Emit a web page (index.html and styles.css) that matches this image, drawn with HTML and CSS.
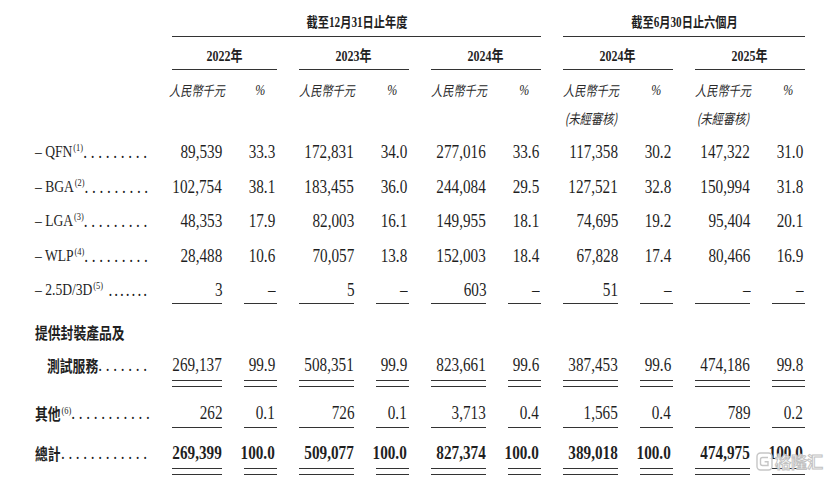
FILE: index.html
```html
<!DOCTYPE html>
<html lang="zh-Hant">
<head>
<meta charset="utf-8">
<title>收入明細</title>
<link rel="stylesheet" href="styles.css">
</head>
<body>
<div class="sheet">
  <div class="row head1">
    <div class="grp annual"><span class="sx">截至12月31日止年度</span></div>
    <div class="grp interim"><span class="sx">截至6月30日止六個月</span></div>
  </div>
  <div class="row years">
    <div class="yr"><span class="sx">2022年</span></div>
    <div class="yr"><span class="sx">2023年</span></div>
    <div class="yr"><span class="sx">2024年</span></div>
    <div class="yr"><span class="sx">2024年</span></div>
    <div class="yr"><span class="sx">2025年</span></div>
  </div>
  <div class="row units">
    <div class="u"><span class="sx">人民幣千元</span></div><div class="pc"><span class="sx">%</span></div>
    <div class="u"><span class="sx">人民幣千元</span></div><div class="pc"><span class="sx">%</span></div>
    <div class="u"><span class="sx">人民幣千元</span></div><div class="pc"><span class="sx">%</span></div>
    <div class="u"><span class="sx">人民幣千元<br>(未經審核)</span></div><div class="pc"><span class="sx">%</span></div>
    <div class="u"><span class="sx">人民幣千元<br>(未經審核)</span></div><div class="pc"><span class="sx">%</span></div>
  </div>

  <div class="row r">
    <div class="lab"><div class="lab-in"><span class="t">– QFN<sup>(1)</sup></span><span class="dots">.........</span></div></div>
    <div class="c"><span>89,539</span></div><div class="c p"><span>33.3</span></div>
    <div class="c"><span>172,831</span></div><div class="c p"><span>34.0</span></div>
    <div class="c"><span>277,016</span></div><div class="c p"><span>33.6</span></div>
    <div class="c"><span>117,358</span></div><div class="c p"><span>30.2</span></div>
    <div class="c"><span>147,322</span></div><div class="c p"><span>31.0</span></div>
  </div>
  <div class="row r">
    <div class="lab"><div class="lab-in"><span class="t">– BGA<sup>(2)</sup></span><span class="dots">.........</span></div></div>
    <div class="c"><span>102,754</span></div><div class="c p"><span>38.1</span></div>
    <div class="c"><span>183,455</span></div><div class="c p"><span>36.0</span></div>
    <div class="c"><span>244,084</span></div><div class="c p"><span>29.5</span></div>
    <div class="c"><span>127,521</span></div><div class="c p"><span>32.8</span></div>
    <div class="c"><span>150,994</span></div><div class="c p"><span>31.8</span></div>
  </div>
  <div class="row r">
    <div class="lab"><div class="lab-in"><span class="t">– LGA<sup>(3)</sup></span><span class="dots">.........</span></div></div>
    <div class="c"><span>48,353</span></div><div class="c p"><span>17.9</span></div>
    <div class="c"><span>82,003</span></div><div class="c p"><span>16.1</span></div>
    <div class="c"><span>149,955</span></div><div class="c p"><span>18.1</span></div>
    <div class="c"><span>74,695</span></div><div class="c p"><span>19.2</span></div>
    <div class="c"><span>95,404</span></div><div class="c p"><span>20.1</span></div>
  </div>
  <div class="row r">
    <div class="lab"><div class="lab-in"><span class="t">– WLP<sup>(4)</sup></span><span class="dots">.........</span></div></div>
    <div class="c"><span>28,488</span></div><div class="c p"><span>10.6</span></div>
    <div class="c"><span>70,057</span></div><div class="c p"><span>13.8</span></div>
    <div class="c"><span>152,003</span></div><div class="c p"><span>18.4</span></div>
    <div class="c"><span>67,828</span></div><div class="c p"><span>17.4</span></div>
    <div class="c"><span>80,466</span></div><div class="c p"><span>16.9</span></div>
  </div>
  <div class="row r-last single">
    <div class="lab"><div class="lab-in"><span class="t">– 2.5D/3D<sup>(5)</sup></span><span class="dots tight">.......</span></div></div>
    <div class="c v"><span>3</span></div><div class="c p v"><span>–</span></div>
    <div class="c v"><span>5</span></div><div class="c p v"><span>–</span></div>
    <div class="c v"><span>603</span></div><div class="c p v"><span>–</span></div>
    <div class="c v"><span>51</span></div><div class="c p v"><span>–</span></div>
    <div class="c v"><span>–</span></div><div class="c p v"><span>–</span></div>
  </div>

  <div class="row r-sub">
    <div class="lab cjk"><div class="lab-in"><span class="t">提供封裝產品及</span></div></div>
  </div>
  <div class="row r-sum double">
    <div class="lab cjk indent"><div class="lab-in"><span class="t">測試服務</span><span class="dots">.......</span></div></div>
    <div class="c v"><span>269,137</span></div><div class="c p v"><span>99.9</span></div>
    <div class="c v"><span>508,351</span></div><div class="c p v"><span>99.9</span></div>
    <div class="c v"><span>823,661</span></div><div class="c p v"><span>99.6</span></div>
    <div class="c v"><span>387,453</span></div><div class="c p v"><span>99.6</span></div>
    <div class="c v"><span>474,186</span></div><div class="c p v"><span>99.8</span></div>
  </div>
  <div class="row r-oth single">
    <div class="lab cjk"><div class="lab-in"><span class="t">其他<sup>(6)</sup></span><span class="dots">...........</span></div></div>
    <div class="c v"><span>262</span></div><div class="c p v"><span>0.1</span></div>
    <div class="c v"><span>726</span></div><div class="c p v"><span>0.1</span></div>
    <div class="c v"><span>3,713</span></div><div class="c p v"><span>0.4</span></div>
    <div class="c v"><span>1,565</span></div><div class="c p v"><span>0.4</span></div>
    <div class="c v"><span>789</span></div><div class="c p v"><span>0.2</span></div>
  </div>
  <div class="row r-tot double total">
    <div class="lab cjk"><div class="lab-in"><span class="t">總計</span><span class="dots">............</span></div></div>
    <div class="c v"><span>269,399</span></div><div class="c p v"><span>100.0</span></div>
    <div class="c v"><span>509,077</span></div><div class="c p v"><span>100.0</span></div>
    <div class="c v"><span>827,374</span></div><div class="c p v"><span>100.0</span></div>
    <div class="c v"><span>389,018</span></div><div class="c p v"><span>100.0</span></div>
    <div class="c v"><span>474,975</span></div><div class="c p v"><span>100.0</span></div>
  </div>
</div>

<div class="mark">
  <svg class="mark-icon" width="17" height="19" viewBox="0 0 17 19" aria-hidden="true">
    <rect x="1" y="1" width="15" height="17" rx="3.5" fill="#fff" fill-opacity="0.85" stroke="#c6c6c6" stroke-width="1.4"/>
    <path d="M12 5.5 H6.5 a2 2 0 0 0 -2 2 v4 a2 2 0 0 0 2 2 H12 V9.8 H8.6" fill="none" stroke="#c6c6c6" stroke-width="1.4"/>
  </svg>
  <span class="mark-text">格隆汇</span>
</div>
</body>
</html>
```

FILE: styles.css
```css
html, body {
  margin: 0;
  background: #fff;
}

body {
  width: 830px;
  height: 481px;
  overflow: hidden;
  position: relative;
  font-family: "Liberation Serif", "Noto Sans CJK TC", serif;
  color: #1f1f1f;
}

.sheet {
  width: 830px;
}

.row {
  display: grid;
  grid-template-columns: 150px 50px 33px repeat(4, 55px 33px);
  column-gap: 22px;
  align-items: start;
}

/* the printed table uses a condensed face: text runs are narrowed to 80% */
.sx,
.c > span {
  display: inline-block;
  transform: scaleX(0.8);
  transform-origin: 50% 50%;
}
.c > span { transform-origin: 100% 50%; }

/* ---------- header ---------- */
.grp {
  font-weight: 700;
  font-size: 14px;
  line-height: 16px;
  padding: 15px 0 5px;
  text-align: center;
  white-space: nowrap;
  border-bottom: 1px solid #333;
}
.annual { grid-column: 2 / 8; }
.interim { grid-column: 8 / 12; }

.yr {
  grid-column: span 2;
  font-weight: 700;
  font-size: 15px;
  line-height: 18px;
  padding: 10px 0 4px;
  text-align: center;
  white-space: nowrap;
  border-bottom: 1px solid #333;
}
.years .yr:first-child { grid-column: 2 / span 2; }

.units { height: 65px; }
.units .u:first-child { grid-column-start: 2; }
.u {
  font-family: "Noto Sans CJK TC", sans-serif;
  font-style: italic;
  font-weight: 400;
  font-size: 14px;
  line-height: 28px;
  padding-top: 6px;
  white-space: nowrap;
  color: #2a2a2a;
  display: flex;
  justify-content: center;
  text-align: center;
}
.pc {
  font-style: italic;
  font-size: 15px;
  line-height: 28px;
  padding-top: 6px;
  text-align: center;
}

/* ---------- body ---------- */
.c {
  display: flex;
  justify-content: flex-end;
  padding-top: 4px;
  font-size: 19px;
  line-height: 26px;
  white-space: nowrap;
}
.c > span { flex: none; }
.p { padding-right: 2px; }

.lab {
  padding-top: 4px;
  line-height: 26px;
  white-space: nowrap;
  font-size: 17px;
}
.lab-in {
  width: 187.5px;
  box-sizing: border-box;
  display: flex;
  justify-content: space-between;
  padding-left: 43.75px;
  padding-right: 3.75px;
  transform: scaleX(0.8);
  transform-origin: 0 50%;
}
.lab .t { flex: none; }
.lab sup {
  font-size: 10.5px;
  line-height: 0;
  vertical-align: 6px;
  margin-left: 1px;
}
.dots {
  flex: none;
  letter-spacing: 4.6px;
  margin-right: -4.6px;
  font-family: "Liberation Serif", serif;
  font-weight: 400;
  font-size: 19px;
}
.dots.tight {
  letter-spacing: 2.5px;
  margin-right: -2.5px;
}
.cjk {
  font-family: "Noto Sans CJK TC", sans-serif;
  font-weight: 700;
  font-size: 16px;
}
.cjk sup { font-family: "Liberation Serif", serif; font-weight: 400; }
.indent .lab-in { padding-left: 58.75px; }

.r { height: 34.5px; }
.r-last { height: 42px; }
.r-sub { height: 33px; }
.r-sum { height: 48px; }
.r-oth { height: 40px; }

.single .v { border-bottom: 1px solid #333; }
.r-oth .v { padding-bottom: 1px; }

.double .v {
  padding-bottom: 9px;
  background-image: linear-gradient(#333, #333), linear-gradient(#333, #333);
  background-size: 100% 1px, 100% 1px;
  background-position: 0 100%, 0 calc(100% - 6px);
  background-repeat: no-repeat;
}

.total .v { font-weight: 700; }

/* ---------- watermark ---------- */
.mark {
  position: absolute;
  left: 756px;
  top: 452px;
  display: flex;
  align-items: center;
  gap: 2px;
}
.mark-icon { display: block; }
.mark-text {
  font-family: "Noto Sans CJK SC", sans-serif;
  font-weight: 700;
  font-size: 16px;
  line-height: 19px;
  color: rgba(255, 255, 255, 0.85);
  -webkit-text-stroke: 1px #c2c2c2;
}
```
